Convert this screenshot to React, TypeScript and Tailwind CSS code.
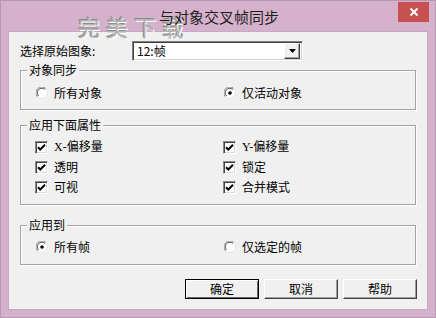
import type { ReactNode } from "react";

const cjk = { fontFamily: '"Noto Sans CJK SC", "Liberation Sans", sans-serif' };
const mixed = { fontFamily: '"Liberation Serif", "Noto Sans CJK SC", serif' };

function Radio({ checked }: { checked?: boolean }) {
  return (
    <svg width="12" height="12" viewBox="0 0 12 12" className="shrink-0">
      <circle cx="6" cy="6" r="5.5" fill="#fff" />
      <path d="M1.6 9.9 A5.5 5.5 0 0 1 9.9 1.6" fill="none" stroke="#8c8c8c" strokeWidth="1" />
      <path d="M2.6 9.0 A4.3 4.3 0 0 1 9.0 2.6" fill="none" stroke="#505050" strokeWidth="1" />
      <path d="M9.9 1.6 A5.5 5.5 0 0 1 1.6 9.9" fill="none" stroke="#e4e4e4" strokeWidth="1" />
      {checked && <circle cx="6" cy="6" r="1.8" fill="#000" />}
    </svg>
  );
}

function Check() {
  return (
    <span className="flex h-[13px] w-[13px] shrink-0 items-center justify-center border border-t-[#8a8a8a] border-l-[#8a8a8a] border-b-white border-r-white bg-white shadow-[inset_1px_1px_0_#404040,inset_-1px_-1px_0_#dcdcdc]">
      <svg width="9" height="9" viewBox="0 0 9 9">
        <path d="M1 4.2 L3.3 6.5 L8 1.8" fill="none" stroke="#000" strokeWidth="2" />
      </svg>
    </span>
  );
}

function Option({ children, mark, font = cjk }: { children: ReactNode; mark: ReactNode; font?: object }) {
  return (
    <div className="flex h-[16px] items-center gap-[6px]">
      {mark}
      <span className="text-[12px] leading-none text-black" style={font}>
        {children}
      </span>
    </div>
  );
}

function Group({ title, className, children }: { title: string; className: string; children: ReactNode }) {
  return (
    <div className={`relative border border-[#a3a3a3] shadow-[1px_1px_0_#fff,inset_1px_1px_0_#fff] ${className}`}>
      <span
        className="absolute -top-[8px] left-[6px] bg-[#f0f0f0] px-[2px] text-[12px] leading-[14px] text-black"
        style={cjk}
      >
        {title}
      </span>
      {children}
    </div>
  );
}

function Button({ label, primary }: { label: string; primary?: boolean }) {
  return (
    <button
      className={`flex h-[20px] w-[74px] items-center justify-center bg-[#f0f0f0] text-[12px] leading-none text-black ${
        primary
          ? "border border-black shadow-[inset_1px_1px_0_#fff,inset_-1px_-1px_0_#696969]"
          : "border border-t-white border-l-white border-b-[#404040] border-r-[#404040] shadow-[inset_-1px_-1px_0_#a0a0a0]"
      }`}
      style={cjk}
    >
      {label}
    </button>
  );
}

export default function App() {
  return (
    <div className="relative flex h-[318px] w-[436px] flex-col overflow-hidden border border-[#b897b0] bg-[#d5b1cc]">
      <div className="relative z-20 flex h-[30px] items-center justify-center pl-[2px] pt-[1px]">
        <span className="text-[15px] leading-none text-[#1e1e1e]" style={cjk}>
          与对象交叉帧同步
        </span>
      </div>
      <button className="absolute left-[397px] top-[1px] flex h-[20px] w-[31px] items-center justify-center bg-[#c75050]">
        <svg width="10" height="10" viewBox="0 0 10 10">
          <path d="M1.5 1.5 L8.5 8.5 M8.5 1.5 L1.5 8.5" stroke="#fff" strokeWidth="2" />
        </svg>
      </button>

      <div className="mx-[7px] flex h-[279px] flex-col border border-[#c6a8bf] bg-[#f0f0f0] pl-[11px] pr-[11px]">
        <div className="mt-[9px] flex h-[20px] items-center">
          <span className="w-[112px] text-[12px] leading-none text-black" style={cjk}>
            选择原始图象:
          </span>
          <div className="flex h-[20px] w-[171px] items-center border border-t-[#808080] border-l-[#808080] border-b-white border-r-white bg-white pl-[4px] shadow-[inset_1px_1px_0_#404040,inset_-1px_-1px_0_#d4d4d4]">
            <span className="flex-1 text-[12px] leading-none text-black" style={cjk}>
              12:帧
            </span>
            <span className="mr-[2px] flex h-[16px] w-[16px] items-center justify-center border border-t-white border-l-white border-b-[#404040] border-r-[#404040] bg-[#f0f0f0] shadow-[inset_-1px_-1px_0_#a0a0a0]">
              <svg width="7" height="4" viewBox="0 0 7 4">
                <path d="M0 0 H7 L3.5 4 Z" fill="#000" />
              </svg>
            </span>
          </div>
        </div>

        <Group title="对象同步" className="mt-[9px] h-[40px] pt-[14px]">
          <div className="grid grid-cols-[188px_1fr] pl-[15px]">
            <Option mark={<Radio />}>所有对象</Option>
            <Option mark={<Radio checked />}>仅活动对象</Option>
          </div>
        </Group>

        <Group title="应用下面属性" className="mt-[15px] h-[80px] pt-[13px]">
          <div className="grid grid-cols-[188px_1fr] gap-y-[4px] pl-[14px]">
            <Option mark={<Check />} font={mixed}>X-偏移量</Option>
            <Option mark={<Check />} font={mixed}>Y-偏移量</Option>
            <Option mark={<Check />}>透明</Option>
            <Option mark={<Check />}>锁定</Option>
            <Option mark={<Check />}>可视</Option>
            <Option mark={<Check />}>合并模式</Option>
          </div>
        </Group>

        <Group title="应用到" className="mt-[20px] h-[40px] pt-[13px]">
          <div className="grid grid-cols-[188px_1fr] pl-[15px]">
            <Option mark={<Radio checked />}>所有帧</Option>
            <Option mark={<Radio />}>仅选定的帧</Option>
          </div>
        </Group>

        <div className="-mr-[1px] mt-[14px] flex justify-end gap-[5px]">
          <Button label="确定" primary />
          <Button label="取消" />
          <Button label="帮助" />
        </div>
      </div>

      {/* watermark, sits under the title text */}
      <span
        className="pointer-events-none absolute left-[77px] top-[14px] z-10 text-[22px] leading-none tracking-[6px] text-[#b4b4b4] [text-shadow:1px_1px_0_#ffffff,-1px_-1px_0_#8a8a8a]"
        style={cjk}
      >
        完美下载
      </span>
    </div>
  );
}
